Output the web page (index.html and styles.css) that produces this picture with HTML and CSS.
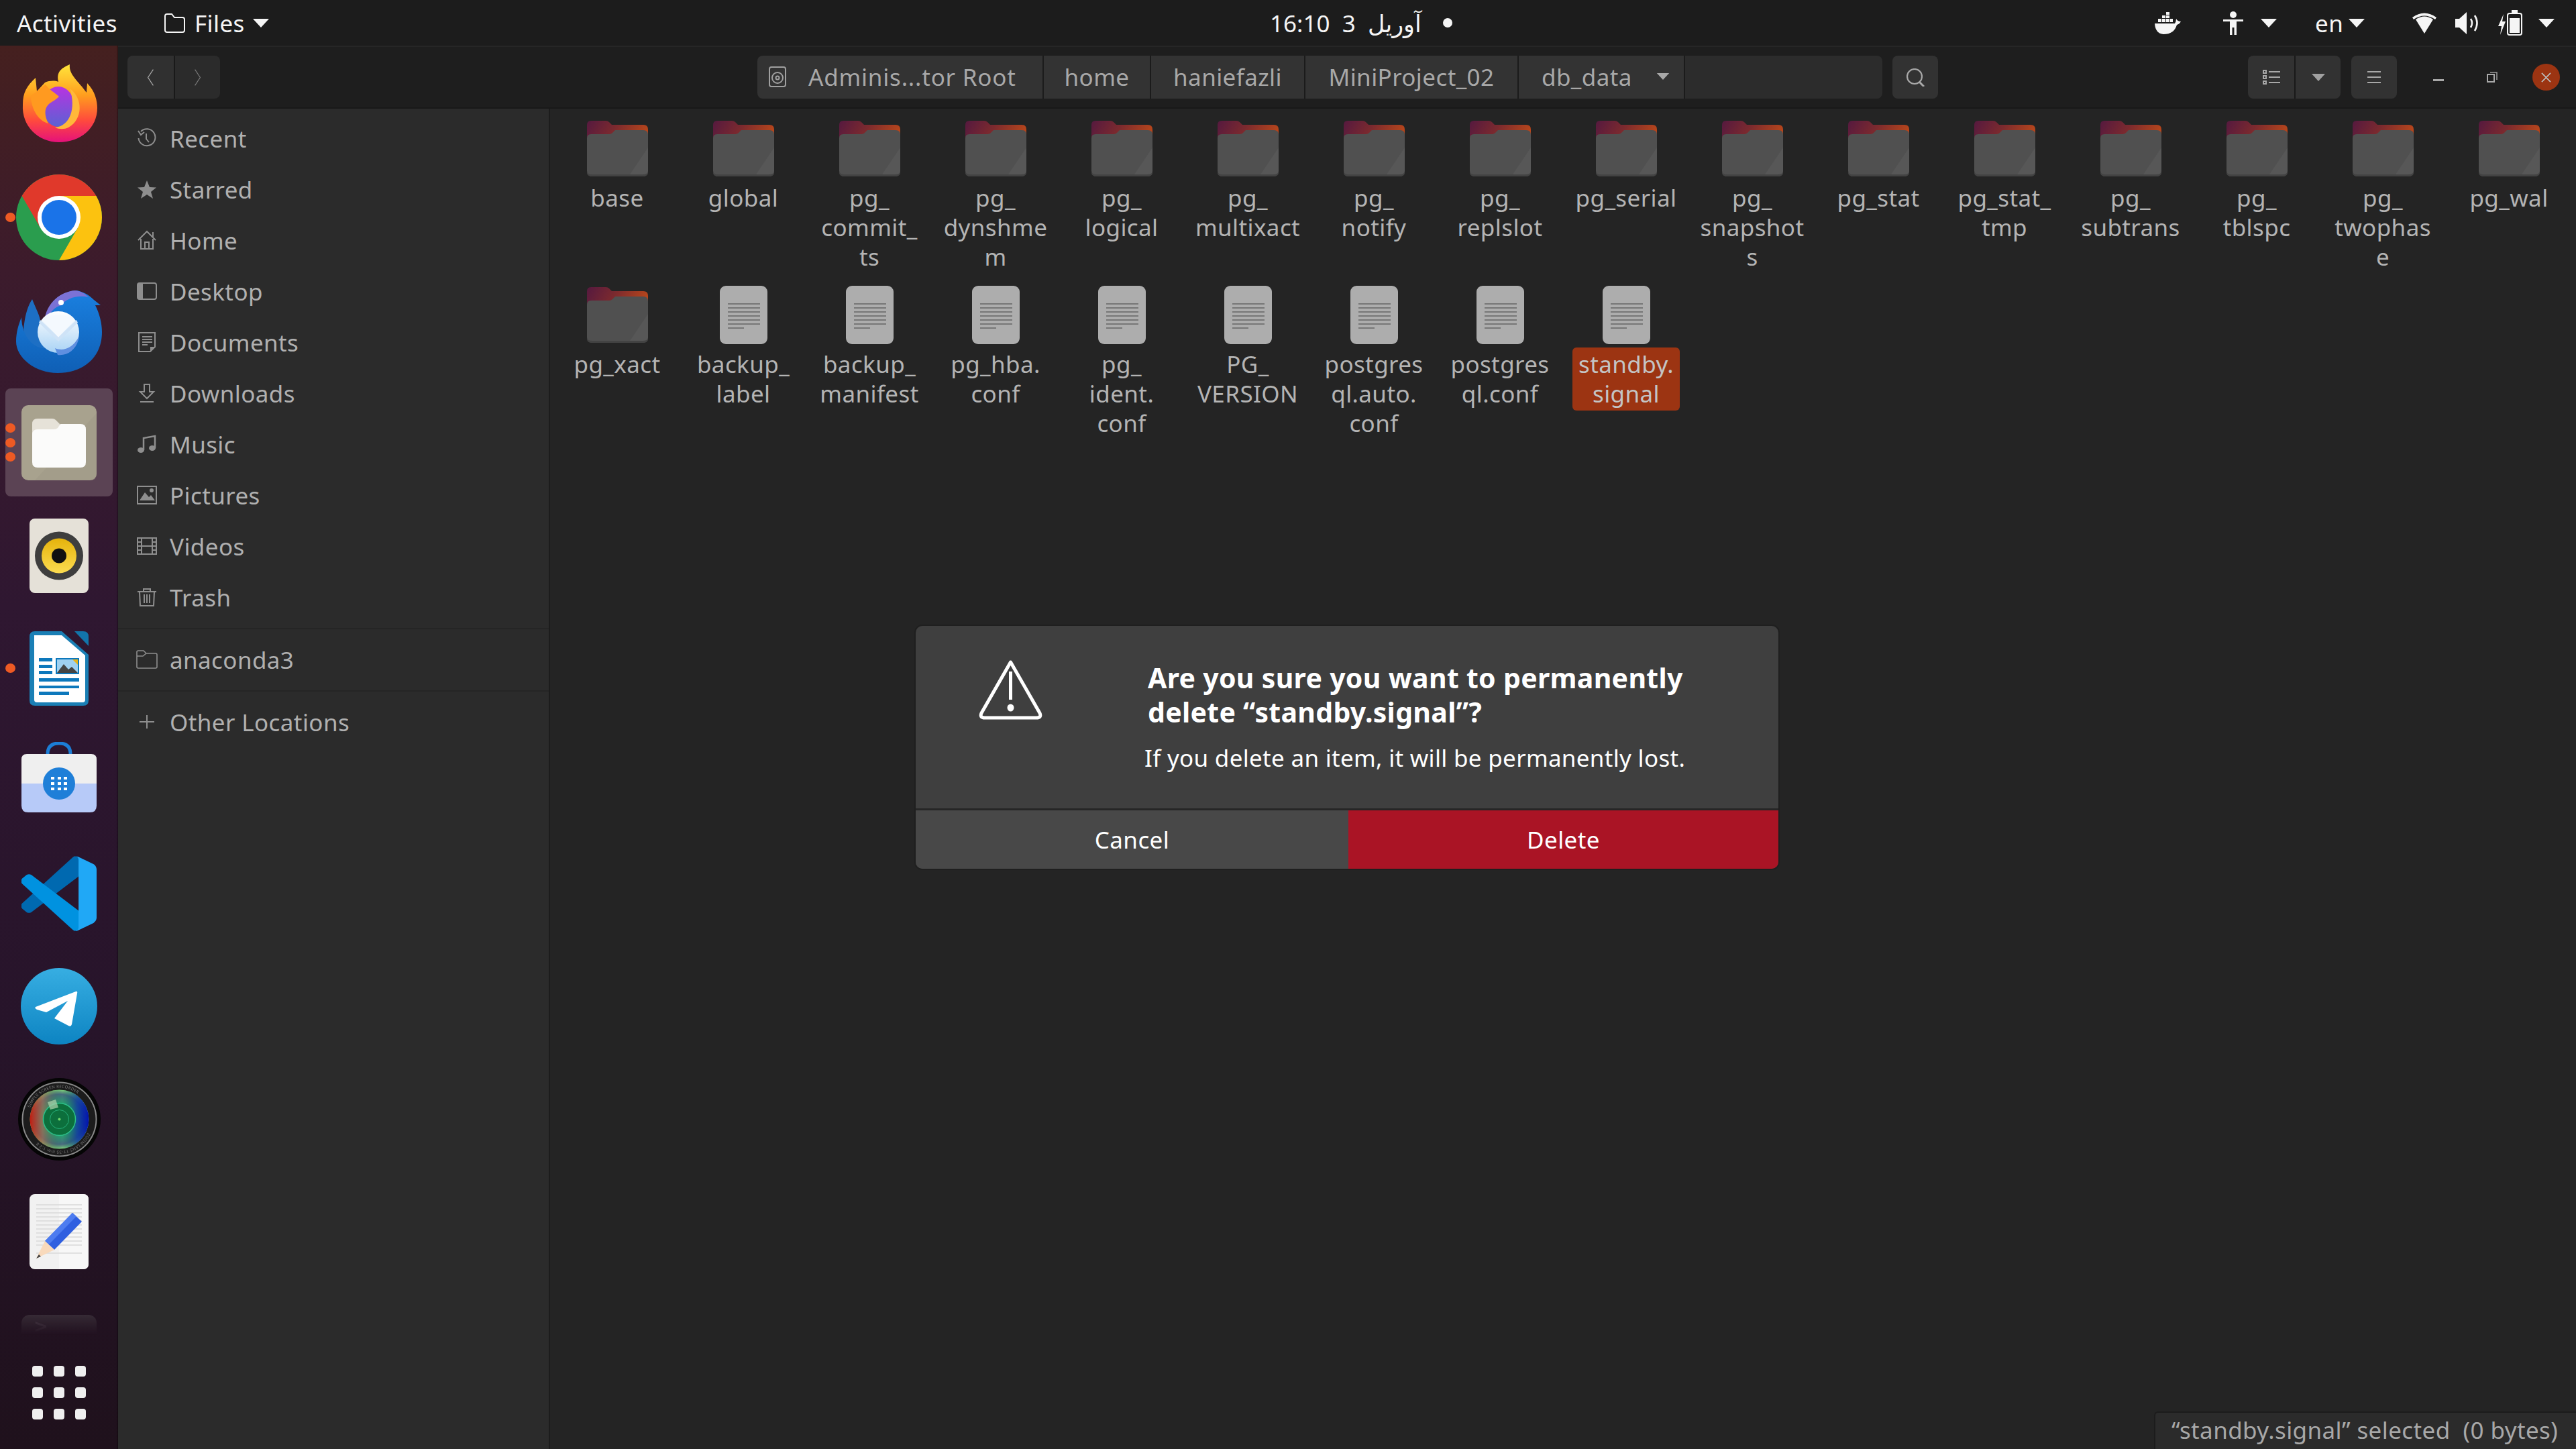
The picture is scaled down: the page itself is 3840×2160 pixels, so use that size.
FILE: index.html
```html
<!DOCTYPE html>
<html lang="en">
<head>
<meta charset="utf-8">
<title>Files</title>
<link rel="stylesheet" href="styles.css">
</head>
<body>
<svg class="defs" width="0" height="0" aria-hidden="true">
  <defs>
    <linearGradient id="fBack" x1="0" y1="0" x2="1" y2="0.25"><stop offset="0" stop-color="#55193f"/><stop offset=".5" stop-color="#7c2a2e"/><stop offset="1" stop-color="#b5451c"/></linearGradient>
    <linearGradient id="ffBody" x1="0" y1="0" x2="0" y2="1"><stop offset="0" stop-color="#ffe53b"/><stop offset=".4" stop-color="#ff9d1e"/><stop offset=".72" stop-color="#ff4a3d"/><stop offset="1" stop-color="#e5117b"/></linearGradient>
    <linearGradient id="ffGlobe" x1="0" y1="0" x2="0" y2="1"><stop offset="0" stop-color="#b833e1"/><stop offset="1" stop-color="#5b62d3"/></linearGradient>
    <linearGradient id="tbBody" x1="0" y1="0" x2="0" y2="1"><stop offset="0" stop-color="#1a80e0"/><stop offset="1" stop-color="#0f5fb5"/></linearGradient>
    <linearGradient id="tbEnv" x1="0" y1="0" x2="0" y2="1"><stop offset="0" stop-color="#ffffff"/><stop offset="1" stop-color="#a9d3f5"/></linearGradient>
    <linearGradient id="tgBg" x1="0" y1="0" x2="0" y2="1"><stop offset="0" stop-color="#37aee2"/><stop offset="1" stop-color="#0d84c2"/></linearGradient>
    <linearGradient id="rbCone" x1="0" y1="0" x2="0" y2="1"><stop offset="0" stop-color="#e5b30c"/><stop offset="1" stop-color="#fbdc50"/></linearGradient>
    <radialGradient id="camLens" cx=".5" cy=".5" r=".5"><stop offset="0" stop-color="#0b7a3a"/><stop offset=".42" stop-color="#0a7a50"/><stop offset=".55" stop-color="#2aa070"/><stop offset=".85" stop-color="#4a6a80"/><stop offset="1" stop-color="#7fd07a"/></radialGradient>
    <linearGradient id="camSide" x1="0" y1="0" x2="1" y2="0"><stop offset="0" stop-color="#c01a10"/><stop offset=".22" stop-color="#a06a50" stop-opacity=".7"/><stop offset=".55" stop-color="#0a6a50" stop-opacity="0"/><stop offset=".8" stop-color="#0a3aa0" stop-opacity=".8"/><stop offset="1" stop-color="#0010b0"/></linearGradient>
    <symbol id="folder" viewBox="0 0 91 83">
      <path d="M6 0H28Q31 0 33 2L37 6H84Q91 6 91 13V40H0V6Q0 0 6 0Z" fill="url(#fBack)"/>
      <path d="M6 20H33Q36 20 38 18L42 14H84Q91 14 91 21V75Q91 83 83 83H8Q0 83 0 75V26Q0 20 6 20Z" fill="#505050"/>
      <path d="M91 40V75Q91 80 85 80H64Z" fill="#575757"/>
      <path d="M0 75V77Q0 83 8 83H83Q91 83 91 77V75Q91 80 83 80H8Q0 80 0 75Z" fill="#434343"/>
    </symbol>
    <symbol id="doc" viewBox="0 0 71 87">
      <rect width="71" height="87" rx="9" fill="#adadad"/>
      <path d="M12 27H60M12 33H60M12 39H60M12 45H60M12 51H60M12 57H60M12 63H36" stroke="#777" stroke-width="2" fill="none"/>
    </symbol>
    <symbol id="caret" viewBox="0 0 24 13"><path d="M0 0H24L12 13Z" fill="currentColor"/></symbol>
  </defs>
</svg>

<div class="screen">
  <header class="topbar">
    <div class="top-left">
      <span class="activities">Activities</span>
      <span class="appmenu">
        <svg class="ti-folder" viewBox="0 0 33 31"><path d="M2 5Q2 2 5 2H12L16 7H28Q31 7 31 10V26Q31 29 28 29H5Q2 29 2 26Z" fill="none" stroke="currentColor" stroke-width="2"/></svg>
        <span>Files</span>
        <svg class="caret"><use href="#caret"/></svg>
      </span>
    </div>
    <div class="clock"><span class="clock-text">16:10&nbsp; 3&nbsp; آوریل</span><i class="clock-dot"></i></div>
    <div class="tray">
      <svg class="t-docker" viewBox="0 0 40 33"><path d="M1 17H31Q33 14 33 10Q35 14 40 14Q38 18 34 19Q30 33 14 33Q2 32 1 17Z" fill="currentColor"/><path d="M6 10h5v5H6zM12 10h5v5h-5zM18 10h5v5h-5zM24 10h4v5h-4zM12 5h5v4h-5zM18 5h5v4h-5zM18 0h5v4h-5z" fill="currentColor"/></svg>
      <svg class="t-access" viewBox="0 0 30 35"><circle cx="15" cy="5" r="5" fill="currentColor"/><path d="M0 12H30V15H20V22L20 35H16.500V24H13.500V35H10V22L10 15H0Z" fill="currentColor"/></svg>
      <svg class="caret t-c1"><use href="#caret"/></svg>
      <span class="t-en">en</span>
      <svg class="caret t-c2"><use href="#caret"/></svg>
      <svg class="t-wifi" viewBox="0 0 38 32"><path d="M19 32L6 11Q19 2 32 11Z" fill="currentColor"/><path d="M1 8Q19 -5 37 8L35 11Q19 0 3 11Z" fill="currentColor"/></svg>
      <svg class="t-vol" viewBox="0 0 35 33"><path d="M0 10H6L17 0V33L6 23H0Z" fill="currentColor"/><path d="M23 10Q27 16 23 23M29 5Q36 16 29 28" fill="none" stroke="currentColor" stroke-width="2.600"/></svg>
      <svg class="t-batt" viewBox="0 0 36 38"><path d="M8 6L0 24H5L3 37L11 17H6Z" fill="currentColor"/><rect x="14" y="5" width="21" height="32" rx="3" fill="none" stroke="currentColor" stroke-width="2"/><rect x="20" y="0" width="9" height="4" fill="currentColor"/><rect x="17" y="12" width="15" height="22" fill="currentColor"/></svg>
      <svg class="caret t-c3"><use href="#caret"/></svg>
    </div>
  </header>

  <div class="desktop">
    <nav class="dock">
      <div class="dock-list">
        <div class="dock-item">
          <svg class="ic-ff" viewBox="0 0 113 116">
            <path d="M2 60C2 42 8 32 21 20L23 40L35 27C42 24 50 24 55 26C52 12 58 6 72 0C70 15 85 25 97 42L98 28C110 40 113 55 113 65C113 95 88 116 56 116C25 116 0 92 2 60Z" fill="url(#ffBody)"/>
            <ellipse cx="55" cy="63" rx="24" ry="30" fill="url(#ffGlobe)"/>
            <path d="M14 47C24 40 32 32 36 30C40 37 50 42 56 48C50 54 44 56 40 60C34 66 34 76 40 88C24 84 14 64 14 47Z" fill="#ff9a20"/>
            <path d="M72 36C92 50 92 82 70 94C64 97 56 97 50 94C72 92 82 66 72 36Z" fill="#ffb83a"/>
          </svg>
        </div>
        <div class="dock-item">
          <i class="run r1"></i>
          <svg class="ic-chrome" viewBox="0 0 128 128">
            <circle cx="64" cy="64" r="64" fill="#2a9d4e"/>
            <path d="M64 64L36.300 80L8.600 32A64 64 0 0 1 119.400 32H64Z" fill="#e0392b"/>
            <path d="M64 32H119.400A64 64 0 0 1 64 128L91.700 80Z" fill="#fcc20f"/>
            <circle cx="64" cy="64" r="32" fill="#fff"/>
            <circle cx="64" cy="64" r="26" fill="#1a73e8"/>
          </svg>
        </div>
        <div class="dock-item">
          <svg class="ic-tb" viewBox="0 0 128 123">
            <path d="M24 13C28 24 34 34 36 44L60 100L40 96C20 90 8 70 12 50C14 34 18 22 24 13Z" fill="#1d6fc4"/>
            <path d="M44 50C42 24 62 2 90 0C100 2 108 6 116 14L126 22H118C124 34 128 48 128 62C128 100 100 123 62 123C28 123 0 100 0 76C0 62 4 50 8 40C8 60 20 90 50 86Z" fill="url(#tbBody)"/>
            <path d="M42 50C42 24 62 2 88 0C96 1 102 4 108 10C92 6 74 12 68 22C56 24 48 36 42 50Z" fill="#7b72d6"/>
            <circle cx="67" cy="18" r="4" fill="#fff"/>
            <circle cx="63" cy="62" r="31" fill="url(#tbEnv)"/>
            <path d="M38 44L63 70L88 44Q63 30 38 44Z" fill="#f4f9fe"/>
            <path d="M63 70L36 44L34 48L63 76L92 48L90 44Z" fill="#cfe3f7"/>
            <path d="M58 86C72 92 86 84 94 68C92 86 78 98 62 96Z" fill="#5f8fe0"/>
          </svg>
        </div>
        <div class="dock-item active">
          <i class="run r3a"></i><i class="run r3b"></i><i class="run r3c"></i>
          <svg class="ic-files" viewBox="0 0 112 112">
            <rect width="112" height="112" rx="10" fill="#a8a28e"/>
            <path d="M112 12L20 112H102Q112 112 112 102Z" fill="#a09a87" opacity=".6"/>
            <path d="M16 28Q16 20 24 20H46Q49 20 51 22L57 28V50H16Z" fill="#e6e2d8"/>
            <path d="M24 36H48Q52 36 54 34L58 28H88Q96 28 96 36V85Q96 93 88 93H24Q16 93 16 85V44Q16 36 24 36Z" fill="#fbfbfa"/>
          </svg>
        </div>
        <div class="dock-item">
          <svg class="ic-rb" viewBox="0 0 88 111">
            <rect width="88" height="111" rx="8" fill="#e5e1d8"/>
            <circle cx="44" cy="55.500" r="36" fill="#3e3e3e"/>
            <circle cx="44" cy="55.500" r="26" fill="url(#rbCone)"/>
            <circle cx="44" cy="55.500" r="11" fill="#111"/>
          </svg>
        </div>
        <div class="dock-item">
          <i class="run r1"></i>
          <svg class="ic-wr" viewBox="0 0 88 111">
            <path d="M67 0H80Q88 0 88 8V22Z" fill="#1275aa"/>
            <path d="M0 8Q0 0 8 0H48L88 35V103Q88 111 80 111H8Q0 111 0 103Z" fill="#1a7fb5"/>
            <path d="M7 6H48L83 36V102Q83 106 79 106H11Q7 106 7 102Z" fill="#fff"/>
            <path d="M14 40H34V45H14zM14 50H34V55H14zM14 59H34V64H14zM14 70H74V75H14zM14 81H74V85H14zM14 90H59V95H14z" fill="#0d78bc"/>
            <rect x="39" y="40" width="35" height="24" fill="#0d78bc"/>
            <rect x="41" y="42" width="31" height="20" fill="#9fd0f0"/>
            <path d="M41 62L51 49L58 57L63 53L72 62Z" fill="#444"/>
            <path d="M64 42H72V50Z" fill="#e8b41a"/>
          </svg>
        </div>
        <div class="dock-item">
          <svg class="ic-sw" viewBox="0 0 112 105">
            <path d="M39 21V18Q39 2 56 2Q73 2 73 18V21" fill="none" stroke="#1c7ed6" stroke-width="5" stroke-linecap="round"/>
            <path d="M0 26Q0 18 8 18H104Q112 18 112 26V62H0Z" fill="#efefef"/>
            <path d="M0 62H112V95Q112 105 102 105H10Q0 105 0 95Z" fill="#b7caf8"/>
            <circle cx="56" cy="62" r="24" fill="#1f7fd8"/>
            <path d="M44 52h5v4h-5zM54 52h5v4h-5zM63 52h5v4h-5zM44 60h5v4h-5zM54 60h5v4h-5zM63 60h5v4h-5zM44 68h5v4h-5zM54 68h5v4h-5zM63 68h5v4h-5z" fill="#fff"/>
          </svg>
        </div>
        <div class="dock-item">
          <svg class="ic-code" viewBox="0 0 100 100">
            <path d="M96 11L75 1C73 0 70 0 68 2L1 63C-1 65 -1 68 1 70L7 75C9 76 11 76 13 75L96 12Z" fill="#0069b0"/>
            <path d="M96 89L75 99C73 100 70 100 68 98L1 37C-1 35 -1 32 1 30L7 25C9 24 11 24 13 25L96 88Z" fill="#0092e0"/>
            <path d="M75 99C73 100 70 100 68 98C71 101 76 99 76 95V5C76 1 71 -1 68 2C70 0 73 0 75 1L96 11C98 12 100 15 100 18V82C100 85 98 88 96 89Z" fill="#20a8f6"/>
          </svg>
        </div>
        <div class="dock-item">
          <svg class="ic-tg" viewBox="0 0 114 114">
            <circle cx="57" cy="57" r="57" fill="url(#tgBg)"/>
            <path d="M22 58L82 35Q85 34 84 38L76 84Q75 88 71 86L50 75L70 49L38 66L24 62Q20 60 22 58Z" fill="#fff"/>
          </svg>
        </div>
        <div class="dock-item">
          <svg class="ic-cam" viewBox="0 0 123 123">
            <defs>
              <path id="camTop" d="M14.500 61.500A47 47 0 0 1 108.500 61.500"/>
              <path id="camBot" d="M108.500 61.500A47 47 0 0 1 14.500 61.500"/>
            </defs>
            <circle cx="61.500" cy="61.500" r="61.500" fill="#050505"/>
            <circle cx="61.500" cy="61.500" r="56" fill="#8a8a8a"/>
            <circle cx="61.500" cy="61.500" r="54" fill="#1c1c1c"/>
            <text class="cam-text"><textPath href="#camTop" startOffset="12%">SIMPLE SCREEN RECORDER</textPath></text>
            <text class="cam-text"><textPath href="#camBot" startOffset="14%">ZOOM LENS   17-35 mm 1:2.8</textPath></text>
            <circle cx="61.500" cy="61.500" r="44" fill="url(#camLens)"/>
            <circle cx="61.500" cy="61.500" r="44" fill="url(#camSide)"/>
            <circle cx="61.500" cy="61.500" r="24" fill="#0c6f3c" stroke="#2dc08a" stroke-width="1.500"/>
            <circle cx="61.500" cy="61.500" r="14" fill="none" stroke="#2dc08a" stroke-width=".8"/>
            <circle cx="61.500" cy="61.500" r="2" fill="#6fd66a"/>
            <path d="M44 36L56 32L60 44L48 47Z" fill="#a8cfa8" opacity=".75"/>
          </svg>
        </div>
        <div class="dock-item">
          <svg class="ic-ge" viewBox="0 0 88 112">
            <rect width="88" height="112" rx="8" fill="#f1f1f1"/>
            <path d="M44 0H80Q88 0 88 8V104Q88 112 80 112H44Z" fill="#f7f7f7"/>
            <path d="M10 16H78M10 22H78M10 28H78M10 34H78M10 40H78M10 46H78M10 52H78M10 58H78M10 64H78M10 70H78M10 76H78M10 88H78" stroke="#d9d9d9" stroke-width="1.500"/>
            <path d="M23 70L64 28L78 41L37 83Z" fill="#2f5fe0"/>
            <path d="M23 70L64 28L70 33L29 75Z" fill="#4d7cf0"/>
            <path d="M23 70L37 83L10 96Z" fill="#f8d9bb"/>
            <path d="M14 90L17 93L10 96Z" fill="#444"/>
          </svg>
        </div>
        <div class="dock-item">
          <div class="term"><span class="term-prompt">&gt;</span></div>
        </div>
      </div>
      <div class="show-apps">
        <i></i><i></i><i></i><i></i><i></i><i></i><i></i><i></i><i></i>
      </div>
    </nav>

    <div class="window">
      <div class="headerbar">
        <div class="btn-group nav">
          <span class="btn nav-btn"><svg viewBox="0 0 14 32"><path d="M12 1L2 16L12 31" fill="none" stroke="#a8a8a8" stroke-width="1.600"/></svg></span>
          <span class="btn nav-btn dim"><svg viewBox="0 0 14 32"><path d="M2 1L12 16L2 31" fill="none" stroke="#777" stroke-width="1.600"/></svg></span>
        </div>
        <div class="pathbar">
          <span class="seg seg-root">
            <svg viewBox="0 0 26 31"><rect x="1" y="1" width="24" height="29" rx="3" fill="none" stroke="#a0a0a0" stroke-width="2"/><circle cx="13" cy="17" r="8" fill="none" stroke="#a0a0a0" stroke-width="2"/><circle cx="13" cy="17" r="2.500" fill="none" stroke="#a0a0a0" stroke-width="2"/></svg>
            <span>Adminis...tor Root</span>
          </span>
          <span class="seg seg-home">home</span>
          <span class="seg seg-hanie">haniefazli</span>
          <span class="seg seg-mini">MiniProject_02</span>
          <span class="seg seg-db"><span>db_data</span><svg class="caret-s"><use href="#caret"/></svg></span>
          <span class="seg-fill"></span>
        </div>
        <span class="btn search"><svg viewBox="0 0 28 27"><circle cx="13" cy="12" r="11" fill="none" stroke="#a8a8a8" stroke-width="2.200"/><path d="M20 20L27 27" stroke="#a8a8a8" stroke-width="3"/></svg></span>
        <div class="btn-group view">
          <span class="btn view-btn"><svg viewBox="0 0 26 23"><path d="M1 1h4v4H1zM1 9h4v4H1zM1 17h4v4H1z" fill="none" stroke="#a8a8a8" stroke-width="2"/><path d="M9 3H26M9 11H26M9 19H26" stroke="#a8a8a8" stroke-width="2.200"/></svg></span>
          <span class="btn view-btn"><svg class="caret-b"><use href="#caret"/></svg></span>
        </div>
        <span class="btn menu"><svg viewBox="0 0 20 20"><path d="M0 2H20M0 10H20M0 18H20" stroke="#a8a8a8" stroke-width="2.200"/></svg></span>
        <div class="winctl">
          <span class="wc wc-min"></span>
          <svg class="wc-res" viewBox="0 0 16 16"><path d="M5 1H15V12" fill="none" stroke="#9a9a9a" stroke-width="1.500"/><rect x="1" y="4" width="10" height="11" fill="none" stroke="#a8a8a8" stroke-width="2"/></svg>
          <span class="wc-close"><svg viewBox="0 0 16 16"><path d="M1 1L15 15M15 1L1 15" stroke="#bbb" stroke-width="1.800"/></svg></span>
        </div>
      </div>

      <div class="content">
        <aside class="sidebar">
          <div class="side-row"><svg viewBox="0 0 30 30"><path d="M6 5A12.500 12.500 0 1 1 2.500 15M2 4L6 10L11 6" fill="none" stroke="currentColor" stroke-width="2"/><path d="M14 8V16L18 21" fill="none" stroke="currentColor" stroke-width="2"/></svg><span>Recent</span></div>
          <div class="side-row"><svg viewBox="0 0 30 30"><path d="M15 2L19 12L29 12.500L21 19L24 29L15 23L6 29L9 19L1 12.500L11 12Z" fill="currentColor"/></svg><span>Starred</span></div>
          <div class="side-row"><svg viewBox="0 0 30 30"><path d="M2 15L15 2L28 15M6 13V28H24V13M12 28V18H18V28M24 3V10" fill="none" stroke="currentColor" stroke-width="2"/></svg><span>Home</span></div>
          <div class="side-row"><svg viewBox="0 0 30 30"><rect x="1" y="3" width="28" height="24" rx="3" fill="none" stroke="currentColor" stroke-width="2"/><path d="M2 4H9V26H2Z" fill="currentColor"/></svg><span>Desktop</span></div>
          <div class="side-row"><svg viewBox="0 0 30 30"><path d="M3 1H27V22L20 29H3Z" fill="none" stroke="currentColor" stroke-width="2"/><path d="M8 7H23M8 11H23M8 15H23M8 19H16" stroke="currentColor" stroke-width="2"/><path d="M20 29V22H27" fill="currentColor"/></svg><span>Documents</span></div>
          <div class="side-row"><svg viewBox="0 0 30 30"><path d="M11 2H19V13H25L15 23L5 13H11Z" fill="none" stroke="currentColor" stroke-width="2"/><path d="M5 28H25" stroke="currentColor" stroke-width="2"/></svg><span>Downloads</span></div>
          <div class="side-row"><svg viewBox="0 0 30 30"><path d="M10 24V6L27 3V21" fill="none" stroke="currentColor" stroke-width="2.500"/><ellipse cx="6" cy="24" rx="5" ry="4" fill="currentColor"/><ellipse cx="23" cy="21" rx="5" ry="4" fill="currentColor"/></svg><span>Music</span></div>
          <div class="side-row"><svg viewBox="0 0 30 30"><rect x="1" y="2" width="28" height="26" fill="none" stroke="currentColor" stroke-width="2"/><path d="M4 23L12 11L18 18L21 15L27 23Z" fill="currentColor"/><circle cx="22" cy="8" r="3" fill="currentColor"/></svg><span>Pictures</span></div>
          <div class="side-row"><svg viewBox="0 0 30 30"><rect x="1" y="3" width="28" height="24" fill="none" stroke="currentColor" stroke-width="2"/><path d="M7 3V27M23 3V27M1 15H29M1 9H7M1 21H7M23 9H29M23 21H29" stroke="currentColor" stroke-width="2"/></svg><span>Videos</span></div>
          <div class="side-row"><svg viewBox="0 0 30 30"><path d="M1 7H29M10 7V3H20V7M4 7L5 28H25L26 7M11 11V24M15 11V24M19 11V24" fill="none" stroke="currentColor" stroke-width="2"/></svg><span>Trash</span></div>
          <div class="side-sep"></div>
          <div class="side-row wide"><svg viewBox="0 0 34 30"><path d="M2 4Q2 2 4 2H12L16 6H30Q32 6 32 8V26Q32 28 30 28H4Q2 28 2 26ZM2 10H11L16 6" fill="none" stroke="currentColor" stroke-width="1.600"/></svg><span>anaconda3</span></div>
          <div class="side-sep"></div>
          <div class="side-row plus"><svg viewBox="0 0 30 30"><path d="M15 5V25M4 15H26" stroke="currentColor" stroke-width="2"/></svg><span>Other Locations</span></div>
        </aside>

        <main class="main">
          <div class="grid">
            <div class="item"><div class="thumb"><svg class="folder"><use href="#folder"/></svg></div><div class="label">base</div></div>
            <div class="item"><div class="thumb"><svg class="folder"><use href="#folder"/></svg></div><div class="label">global</div></div>
            <div class="item"><div class="thumb"><svg class="folder"><use href="#folder"/></svg></div><div class="label">pg_<br>commit_<br>ts</div></div>
            <div class="item"><div class="thumb"><svg class="folder"><use href="#folder"/></svg></div><div class="label">pg_<br>dynshme<br>m</div></div>
            <div class="item"><div class="thumb"><svg class="folder"><use href="#folder"/></svg></div><div class="label">pg_<br>logical</div></div>
            <div class="item"><div class="thumb"><svg class="folder"><use href="#folder"/></svg></div><div class="label">pg_<br>multixact</div></div>
            <div class="item"><div class="thumb"><svg class="folder"><use href="#folder"/></svg></div><div class="label">pg_<br>notify</div></div>
            <div class="item"><div class="thumb"><svg class="folder"><use href="#folder"/></svg></div><div class="label">pg_<br>replslot</div></div>
            <div class="item"><div class="thumb"><svg class="folder"><use href="#folder"/></svg></div><div class="label">pg_serial</div></div>
            <div class="item"><div class="thumb"><svg class="folder"><use href="#folder"/></svg></div><div class="label">pg_<br>snapshot<br>s</div></div>
            <div class="item"><div class="thumb"><svg class="folder"><use href="#folder"/></svg></div><div class="label">pg_stat</div></div>
            <div class="item"><div class="thumb"><svg class="folder"><use href="#folder"/></svg></div><div class="label">pg_stat_<br>tmp</div></div>
            <div class="item"><div class="thumb"><svg class="folder"><use href="#folder"/></svg></div><div class="label">pg_<br>subtrans</div></div>
            <div class="item"><div class="thumb"><svg class="folder"><use href="#folder"/></svg></div><div class="label">pg_<br>tblspc</div></div>
            <div class="item"><div class="thumb"><svg class="folder"><use href="#folder"/></svg></div><div class="label">pg_<br>twophas<br>e</div></div>
            <div class="item"><div class="thumb"><svg class="folder"><use href="#folder"/></svg></div><div class="label">pg_wal</div></div>
            <div class="item"><div class="thumb"><svg class="folder"><use href="#folder"/></svg></div><div class="label">pg_xact</div></div>
            <div class="item"><div class="thumb"><svg class="file"><use href="#doc"/></svg></div><div class="label">backup_<br>label</div></div>
            <div class="item"><div class="thumb"><svg class="file"><use href="#doc"/></svg></div><div class="label">backup_<br>manifest</div></div>
            <div class="item"><div class="thumb"><svg class="file"><use href="#doc"/></svg></div><div class="label">pg_hba.<br>conf</div></div>
            <div class="item"><div class="thumb"><svg class="file"><use href="#doc"/></svg></div><div class="label">pg_<br>ident.<br>conf</div></div>
            <div class="item"><div class="thumb"><svg class="file"><use href="#doc"/></svg></div><div class="label">PG_<br>VERSION</div></div>
            <div class="item"><div class="thumb"><svg class="file"><use href="#doc"/></svg></div><div class="label">postgres<br>ql.auto.<br>conf</div></div>
            <div class="item"><div class="thumb"><svg class="file"><use href="#doc"/></svg></div><div class="label">postgres<br>ql.conf</div></div>
            <div class="item"><div class="thumb"><svg class="file"><use href="#doc"/></svg></div><div class="label selected">standby.<br>signal</div></div>
          </div>
          <div class="statusbar">“standby.signal” selected  (0 bytes)</div>
        </main>
      </div>
    </div>
  </div>

  <div class="dialog">
    <div class="dialog-body">
      <svg class="warn" viewBox="0 0 97 90"><path d="M48.500 4L92 80Q95 87 87 87H10Q2 87 5 80Z" fill="none" stroke="#fff" stroke-width="5" stroke-linejoin="round"/><path d="M48.500 18V60" stroke="#fff" stroke-width="5"/><ellipse cx="48.500" cy="72" rx="5" ry="5.500" fill="#fff"/></svg>
      <div class="dialog-text">
        <div class="dialog-title">Are you sure you want to permanently<br>delete “standby.signal”?</div>
        <div class="dialog-sub">If you delete an item, it will be permanently lost.</div>
      </div>
    </div>
    <div class="dialog-actions">
      <span class="d-btn d-cancel">Cancel</span>
      <span class="d-btn d-delete">Delete</span>
    </div>
  </div>
</div>
</body>
</html>
```
FILE: styles.css
```css
* { box-sizing: border-box; }
html, body { margin: 0; padding: 0; background: #242424; }
body { font-family: "Noto Sans", "DejaVu Sans", sans-serif; font-size: 35px; letter-spacing: .4px; color: #b4b4b4; }
.defs { position: absolute; }
svg { display: block; flex: none; }
.screen { position: relative; width: 3840px; height: 2160px; overflow: hidden; display: flex; flex-direction: column; }

/* top bar */
.topbar { height: 68px; background: #1c1c1c; color: #f5f5f5; display: grid; grid-template-columns: 1893px auto 1fr; align-items: center; flex: none; }
.top-left { display: flex; align-items: center; padding-left: 25px; }
.activities { width: 219px; }
.appmenu { display: flex; align-items: center; }
.ti-folder { width: 33px; height: 31px; margin-right: 13px; }
.caret { width: 24px; height: 13px; margin-left: 12px; color: #f5f5f5; }
.clock { display: flex; align-items: center; }
.clock-text { font-family: "Noto Sans", "DejaVu Sans", sans-serif; white-space: nowrap; }
.clock-dot { width: 14px; height: 14px; border-radius: 50%; background: #f5f5f5; margin-left: 32px; }
.tray { display: flex; align-items: center; justify-content: flex-end; padding-right: 32px; }
.t-docker { width: 40px; height: 33px; }
.t-access { width: 30px; height: 35px; margin-left: 63px; }
.t-c1 { margin-left: 26px; }
.t-en { margin-left: 57px; width: 38px; white-space: nowrap; }
.t-c2 { margin-left: 12px; }
.t-wifi { width: 38px; height: 32px; margin-left: 70px; }
.t-vol { width: 35px; height: 33px; margin-left: 27px; }
.t-batt { width: 36px; height: 38px; margin-left: 29px; }
.t-c3 { margin-left: 24px; }

.desktop { flex: 1; display: flex; min-height: 0; }

/* dock */
.dock { width: 176px; flex: none; display: flex; flex-direction: column; background: linear-gradient(180deg, #45201f 0%, #3c1b2c 16%, #2f1731 40%, #27142a 70%, #1f111c 100%); box-shadow: inset -2px 0 0 rgba(0,0,0,.25); }
.dock-list { height: 1922px; padding-top: 4px; overflow: hidden; flex: none; -webkit-mask-image: linear-gradient(180deg, #000 97%, transparent 100%); mask-image: linear-gradient(180deg, #000 97%, transparent 100%); }
.dock-item { position: relative; height: 168px; display: flex; align-items: center; justify-content: center; }
.dock-item.active::before { content: ""; position: absolute; left: 8px; top: 3px; width: 160px; height: 161px; border-radius: 8px; background: #5b4354; }
.dock-item svg { position: relative; }
.run { position: absolute; left: 8px; width: 15px; height: 14px; border-radius: 50%; background: #ee5a24; top: 77px; }
.r3a { top: 55px; } .r3b { top: 77px; } .r3c { top: 98px; }
.ic-ff { width: 113px; height: 116px; margin-top: -4px; }
.ic-chrome { width: 128px; height: 128px; }
.ic-tb { width: 128px; height: 123px; margin-top: 4px; }
.ic-files { width: 112px; height: 112px; }
.ic-rb, .ic-wr { width: 88px; height: 111px; }
.ic-sw { width: 112px; height: 105px; margin-top: -12px; }
.ic-code { width: 112px; height: 112px; }
.ic-tg { width: 114px; height: 114px; }
.ic-cam { width: 123px; height: 123px; }
.cam-text { font-family: "Noto Sans", sans-serif; font-size: 6px; letter-spacing: .4px; fill: #7a7a7a; }
.ic-ge { width: 88px; height: 112px; }
.term { width: 112px; height: 88px; border-radius: 12px 12px 0 0; background: linear-gradient(180deg, #4a4249, #2c1f2a); padding: 2px 0 0 18px; color: #6d636b; font-family: "DejaVu Sans", sans-serif; font-size: 26px; font-weight: 700; }
.show-apps { flex: 1; display: grid; grid-template-columns: repeat(3, 16px); grid-auto-rows: 16px; gap: 16px; justify-content: center; align-content: start; padding-top: 46px; }
.show-apps i { background: #efefef; border-radius: 4px; }

/* window */
.window { flex: 1; display: flex; flex-direction: column; min-width: 0; }
.headerbar { height: 94px; flex: none; display: flex; align-items: center; background: #1e1e1e; border-top: 2px solid #262626; border-bottom: 2px solid #181818; padding-left: 14px; }
.btn-group { display: flex; height: 64px; border-radius: 8px; overflow: hidden; }
.btn { display: flex; align-items: center; justify-content: center; background: #323232; height: 64px; }
.nav-btn { width: 69px; background: #303030; }
.nav-btn + .nav-btn { border-left: 2px solid #191919; background: #2b2b2b; }
.nav-btn svg { width: 11px; height: 31px; }
.pathbar { display: flex; height: 64px; margin-left: 801px; border-radius: 8px; overflow: hidden; }
.seg { display: flex; align-items: center; justify-content: center; background: #333; border-right: 2px solid #1b1b1b; color: #a8a8a8; height: 64px; white-space: nowrap; padding-bottom: 2px; }
.seg-root { width: 427px; justify-content: flex-start; padding-left: 17px; letter-spacing: .8px; }
.seg-root svg { width: 26px; height: 31px; margin-right: 33px; }
.seg-home { width: 160px; }
.seg-hanie { width: 230px; }
.seg-mini { width: 318px; }
.seg-db { width: 248px; justify-content: flex-start; padding-left: 34px; }
.caret-s { width: 20px; height: 10px; margin-left: 36px; color: #a8a8a8; }
.seg-fill { width: 294px; background: #2c2c2c; }
.search { width: 68px; margin-left: 15px; border-radius: 8px; }
.search svg { width: 28px; height: 27px; }
.view { margin-left: 462px; }
.view-btn { width: 69px; }
.view-btn + .view-btn { border-left: 2px solid #191919; }
.view-btn svg:not(.caret-b) { width: 26px; height: 23px; }
.caret-b { width: 20px; height: 11px; color: #a0a0a0; }
.menu { width: 68px; margin-left: 16px; border-radius: 8px; }
.menu svg { width: 20px; height: 20px; }
.winctl { display: flex; align-items: center; margin-left: 54px; }
.wc-min { width: 16px; height: 3px; background: #a8a8a8; margin-top: 8px; }
.wc-res { width: 16px; height: 16px; margin-left: 64px; }
.wc-close { width: 41px; height: 40px; border-radius: 50%; background: #9c3412; margin-left: 52px; display: flex; align-items: center; justify-content: center; }
.wc-close svg { width: 15px; height: 15px; }

.content { flex: 1; display: flex; min-height: 0; }
.sidebar { width: 644px; flex: none; background: #2b2b2b; border-right: 2px solid #1c1c1c; padding-top: 7px; }
.side-row { height: 76px; display: flex; align-items: center; padding: 0 0 2px 28px; color: #b0b0b0; }
.side-row svg { width: 30px; height: 30px; color: #8e8e8e; margin-right: 19px; }
.side-row.wide svg { width: 34px; margin-right: 17px; margin-left: -2px; }
.side-row.plus svg { margin-right: 19px; }
.side-sep { height: 2px; background: #252525; margin: 7px 0 8px; }

.main { position: relative; flex: 1; background: #242424; padding: 12px 0 0 6px; }
.grid { display: grid; grid-template-columns: repeat(16, 188px); grid-auto-rows: 248px; }
.item { display: flex; flex-direction: column; align-items: center; }
.thumb { height: 96px; display: flex; align-items: center; justify-content: center; flex: none; padding-bottom: 1px; }
.folder { width: 91px; height: 83px; }
.file { width: 71px; height: 87px; }
.label { width: 160px; padding: 3px 0; line-height: 44px; text-align: center; white-space: nowrap; border-radius: 6px; }
.selected { background: #9c3412; color: #c4c4c4; }
.statusbar { position: absolute; right: 0; bottom: 0; width: 629px; height: 56px; background: #2b2b2b; border: 2px solid #1c1c1c; border-width: 2px 0 0 2px; border-top-left-radius: 6px; padding-left: 24px; line-height: 52px; color: #a8a8a8; white-space: pre; }

/* dialog */
.dialog { position: absolute; left: 1365px; top: 933px; width: 1286px; height: 362px; border-radius: 10px; background: #3f3f3f; overflow: hidden; display: flex; flex-direction: column; color: #fff; box-shadow: 0 0 0 2px #1f1f1f; }
.dialog-body { height: 275px; flex: none; display: flex; border-bottom: 3px solid #262626; }
.warn { width: 97px; height: 90px; margin: 50px 0 0 93px; }
.dialog-text { margin-left: 152px; padding-top: 52px; white-space: nowrap; }
.dialog-title { font-weight: 700; font-size: 41px; letter-spacing: .3px; line-height: 51px; margin-left: 4px; }
.dialog-sub { letter-spacing: .3px; line-height: 50px; margin-top: 18px; margin-left: -1px; }
.dialog-actions { flex: 1; display: flex; }
.d-btn { display: flex; align-items: center; justify-content: center; }
.d-cancel { width: 645px; background: #484848; }
.d-delete { flex: 1; background: #aa1425; }
```
